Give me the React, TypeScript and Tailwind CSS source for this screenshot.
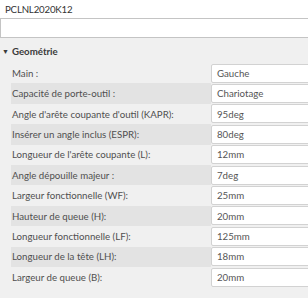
import React from 'react'

const rows: [string, string][] = [
  ['Main :', 'Gauche'],
  ['Capacité de porte-outil :', 'Chariotage'],
  ["Angle d'arête coupante d'outil (KAPR):", '95deg'],
  ['Insérer un angle inclus (ESPR):', '80deg'],
  ["Longueur de l'arête coupante (L):", '12mm'],
  ['Angle dépouille majeur :', '7deg'],
  ['Largeur fonctionnelle (WF):', '25mm'],
  ['Hauteur de queue (H):', '20mm'],
  ['Longueur fonctionnelle (LF):', '125mm'],
  ['Longueur de la tête (LH):', '18mm'],
  ['Largeur de queue (B):', '20mm'],
]

export default function App() {
  return (
    <div
      className="w-[308px] h-[298px] overflow-hidden bg-[#f0f0f0] text-[9.7px] text-[#4f4f4f]"
      style={{ fontFamily: 'Lato, sans-serif' }}
    >
      <div className="h-[19px] bg-white border-b border-[#c4c4c4] flex items-center pl-[5px] text-[#333] tracking-[-0.2px]">
        PCLNL2020K12
      </div>
      <div className="h-[19px] bg-white border border-t-0 border-[#c4c4c4] -mr-[2px]" />

      <div className="flex items-center h-[24px] mt-[1px] pl-[2px] font-bold text-[#3a3a3a]">
        <span className="text-[7px] mr-[3px]">▼</span>
        Geométrie
      </div>

      <div className="flex flex-col">
        {rows.map(([label, value], i) => (
          <div key={label} className="flex h-[20.4px] ml-[11px]">
            <div
              className={`w-[200px] shrink-0 flex items-center pl-[1px] whitespace-nowrap overflow-hidden ${
                i % 2 === 1 ? 'bg-[#e3e3e3]' : ''
              }`}
            >
              {label}
            </div>
            <div className="w-[110px] shrink-0 flex items-center">
              <div className="h-[19px] w-full bg-white border border-[#d2d2d2] rounded-[2px] flex items-center pl-[5px] text-[#555]">
                {value}
              </div>
            </div>
          </div>
        ))}
      </div>
    </div>
  )
}
